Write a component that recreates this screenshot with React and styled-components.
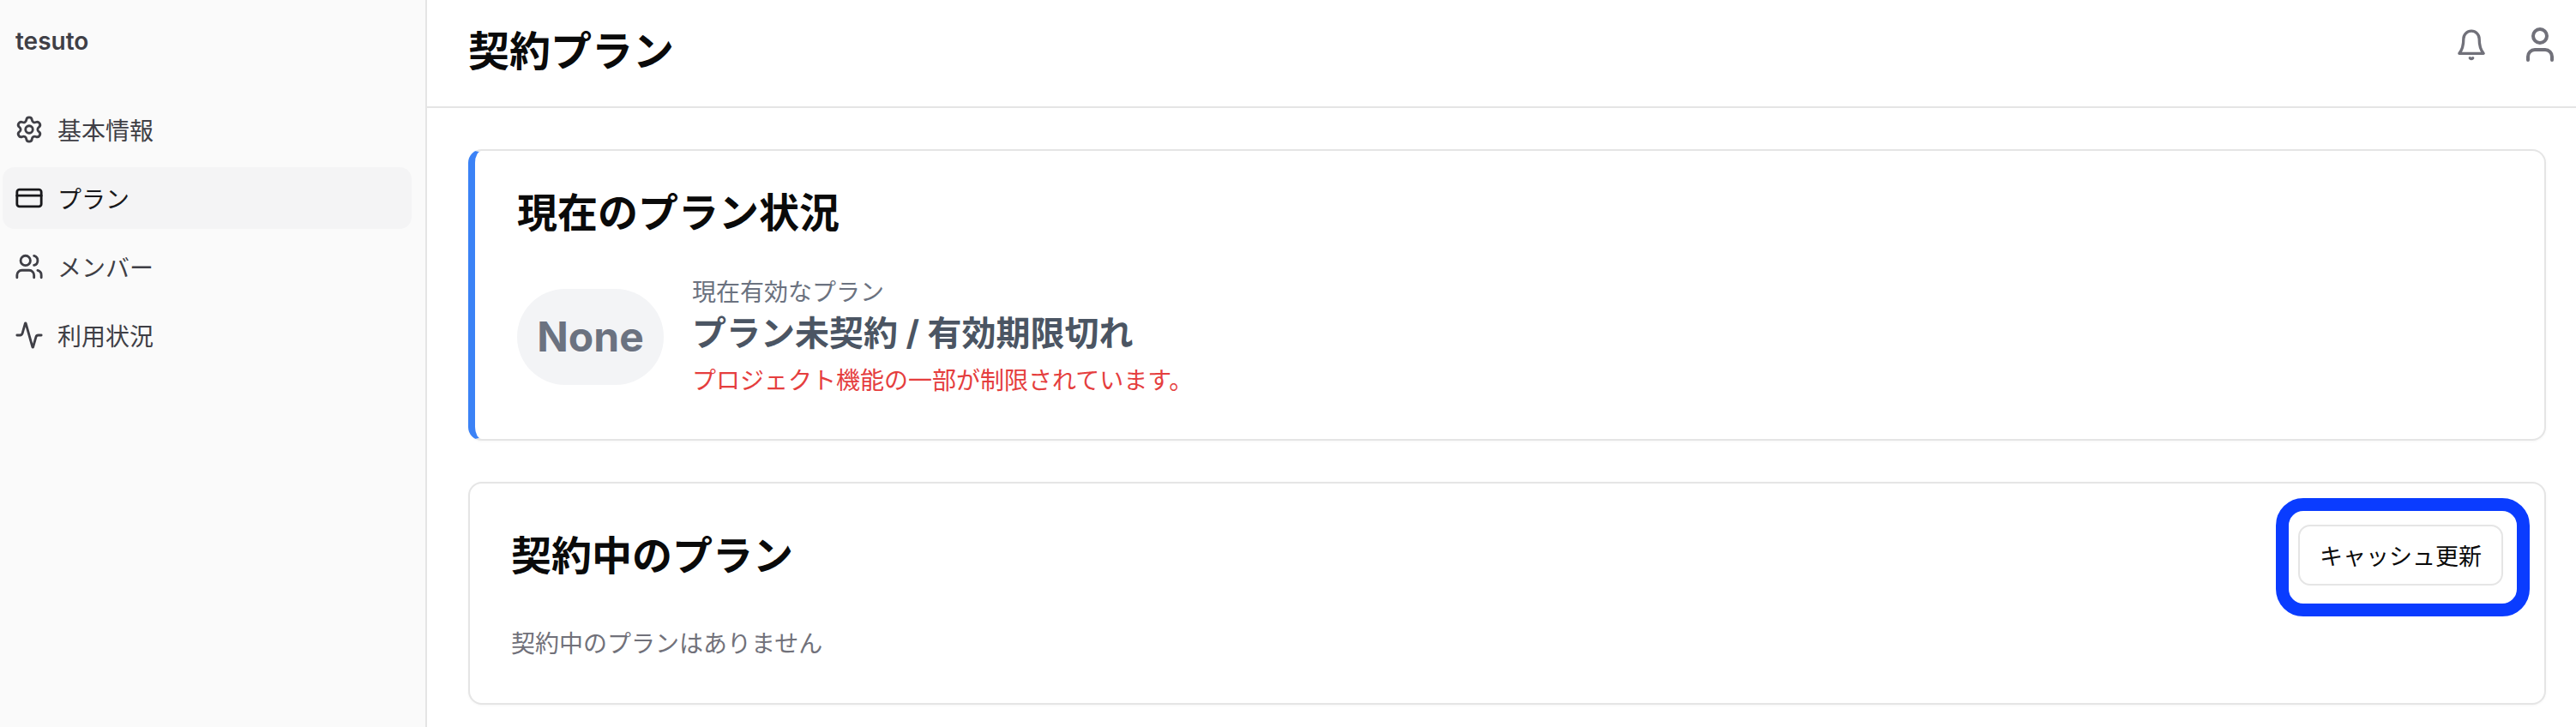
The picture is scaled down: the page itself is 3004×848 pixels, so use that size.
import React from 'react';
import styled, { createGlobalStyle } from 'styled-components';
import { Settings, CreditCard, Users, Activity, User } from 'lucide-react';

const GlobalStyle = createGlobalStyle`
  html, body { margin: 0; padding: 0; background: #fff; }
  body { font-family: Inter, "Noto Sans CJK JP", sans-serif; }
  * { box-sizing: border-box; }
`;

const Shell = styled.div`
  display: flex;
  width: 3004px;
  height: 848px;
  overflow: hidden;
`;

const Sidebar = styled.aside`
  width: 498px;
  flex-shrink: 0;
  background: #fafafa;
  border-right: 2px solid #e5e5e5;
  padding: 0 0 0 3px;
`;

const Brand = styled.div`
  height: 96px;
  padding: 0 15px;
  display: flex;
  align-items: center;
  font-size: 28px;
  font-weight: 600;
  color: #3f3f46;
`;

const Nav = styled.nav`
  display: flex;
  flex-direction: column;
  gap: 8px;
  margin-top: 19px;
  width: 477px;
`;

const NavItem = styled.div`
  height: 72px;
  display: flex;
  align-items: center;
  gap: 16px;
  padding: 0 14px;
  border-radius: 14px;
  font-size: 28px;
  color: ${(p) => (p.$active ? '#18181b' : '#3f3f46')};
  background: ${(p) => (p.$active ? '#f4f4f5' : 'transparent')};
`;

const Main = styled.main`
  flex: 1;
  min-width: 0;
`;

const Header = styled.header`
  height: 126px;
  border-bottom: 2px solid #e5e5e5;
  display: flex;
  align-items: center;
  justify-content: space-between;
  padding: 0 18px 20px 48px;
`;

const PageTitle = styled.h1`
  margin: 8px 0 0;
  font-size: 48px;
  font-weight: 700;
  color: #0a0a0a;
`;

const HeaderIcons = styled.div`
  display: flex;
  align-items: center;
  gap: 36px;
  color: #71717a;
`;

const Content = styled.div`
  padding: 48px 35px 0 48px;
  display: flex;
  flex-direction: column;
  gap: 48px;
`;

const Card = styled.section`
  background: #fff;
  border: 2px solid #e5e5e5;
  border-radius: 16px;
  box-shadow: 0 1px 3px rgba(0, 0, 0, 0.04);
`;

const StatusCard = styled(Card)`
  height: 340px;
  border-left: 8px solid #3b82f6;
  padding: 40px 49px;
`;

const ContractCard = styled(Card)`
  height: 260px;
  padding: 52px 48px;
  position: relative;
`;

const CardTitle = styled.h2`
  margin: 0;
  font-size: 47px;
  line-height: 64px;
  font-weight: 700;
  color: #0a0a0a;
`;

const StatusRow = styled.div`
  display: flex;
  align-items: center;
  gap: 33px;
  margin-top: 41px;
`;

const PlanBadge = styled.div`
  width: 171px;
  height: 112px;
  border-radius: 56px;
  background: #f3f4f6;
  color: #6b7280;
  font-size: 48px;
  font-weight: 700;
  display: flex;
  align-items: center;
  justify-content: center;
`;

const StatusText = styled.div`
  display: flex;
  flex-direction: column;
`;

const StatusLabel = styled.div`
  font-size: 28px;
  line-height: 40px;
  color: #6b7280;
`;

const StatusName = styled.div`
  font-size: 40px;
  line-height: 56px;
  font-weight: 700;
  color: #4b5563;
`;

const StatusNote = styled.div`
  font-size: 28px;
  line-height: 40px;
  color: #e53e3e;
  margin-top: 7px;
`;

const ContractHead = styled.div`
  display: flex;
  align-items: center;
  justify-content: space-between;
`;

const Highlight = styled.div`
  position: absolute;
  top: 17px;
  right: 17px;
  width: 296px;
  height: 138px;
  border: 15px solid #0a3cff;
  border-radius: 32px;
  padding: 16px 16px 21px 11px;
`;

const RefreshButton = styled.button`
  display: block;
  width: 239px;
  height: 71px;
  background: #fff;
  border: 2px solid #e5e5e5;
  border-radius: 14px;
  font-family: inherit;
  font-size: 27px;
  color: #0a0a0a;
  padding: 0;
`;

const EmptyText = styled.p`
  margin: 51px 0 0;
  font-size: 28px;
  line-height: 40px;
  color: #71717a;
`;

const navItems = [
  { icon: Settings, label: '基本情報' },
  { icon: CreditCard, label: 'プラン', active: true },
  { icon: Users, label: 'メンバー' },
  { icon: Activity, label: '利用状況' },
];

const BellIcon = () => (
  <svg width="40" height="40" viewBox="0 0 24 24" fill="none" stroke="currentColor" strokeWidth="2" strokeLinecap="round" strokeLinejoin="round">
    <path d="M6.5 8a5.5 5.5 0 0 1 11 0c0 3 .2 7 3 10.2H3.500C6.300 15 6.500 11 6.500 8" />
    <path d="M11 21.400a1.500 1.500 0 0 0 2 0" />
  </svg>
);

const App = () => (
  <>
    <GlobalStyle />
    <Shell>
      <Sidebar>
        <Brand>tesuto</Brand>
        <Nav>
          {navItems.map(({ icon: Icon, label, active }) => (
            <NavItem key={label} $active={active}>
              <Icon size={34} strokeWidth={2} />
              {label}
            </NavItem>
          ))}
        </Nav>
      </Sidebar>
      <Main>
        <Header>
          <PageTitle>契約プラン</PageTitle>
          <HeaderIcons>
            <BellIcon />
            <User size={48} strokeWidth={2} />
          </HeaderIcons>
        </Header>
        <Content>
          <StatusCard>
            <CardTitle>現在のプラン状況</CardTitle>
            <StatusRow>
              <PlanBadge>None</PlanBadge>
              <StatusText>
                <StatusLabel>現在有効なプラン</StatusLabel>
                <StatusName>プラン未契約 / 有効期限切れ</StatusName>
                <StatusNote>プロジェクト機能の一部が制限されています。</StatusNote>
              </StatusText>
            </StatusRow>
          </StatusCard>
          <ContractCard>
            <ContractHead>
              <CardTitle>契約中のプラン</CardTitle>
              <Highlight>
                <RefreshButton>キャッシュ更新</RefreshButton>
              </Highlight>
            </ContractHead>
            <EmptyText>契約中のプランはありません</EmptyText>
          </ContractCard>
        </Content>
      </Main>
    </Shell>
  </>
);

export default App;
